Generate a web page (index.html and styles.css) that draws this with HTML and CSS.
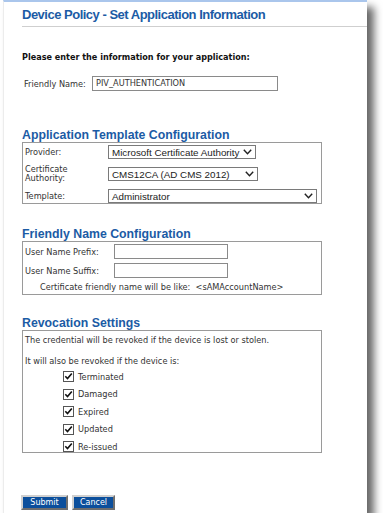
FILE: index.html
```html
<!DOCTYPE html>
<html lang="en">
<head>
    <meta charset="UTF-8">
    <title>Device Policy - Set Application Information</title>
    <link rel="stylesheet" href="styles.css">
</head>
<body>
    <div class="window">
        <h1 class="title">Device Policy - Set Application Information</h1>

        <p class="intro">Please enter the information for your application:</p>
        <div class="friendly-row">
            <span class="friendly-label">Friendly Name:</span>
            <span class="text-input friendly-input">PIV_AUTHENTICATION</span>
        </div>

        <!-- Application template -->
        <h2 class="section-title">Application Template Configuration</h2>
        <div class="box template-box">
            <span class="row-label">Provider:</span>
            <div class="select select-provider">Microsoft Certificate Authority
                <svg class="chevron" width="9" height="6" viewBox="0 0 9 6"><path d="M0.8 0.8 L4.5 4.8 L8.2 0.8" fill="none" stroke="#222" stroke-width="1.4"/></svg>
            </div>
            <span class="row-label two-line">Certificate<br>Authority:</span>
            <div class="select select-ca">CMS12CA (AD CMS 2012)
                <svg class="chevron" width="9" height="6" viewBox="0 0 9 6"><path d="M0.8 0.8 L4.5 4.8 L8.2 0.8" fill="none" stroke="#222" stroke-width="1.4"/></svg>
            </div>
            <span class="row-label">Template:</span>
            <div class="select select-template">Administrator
                <svg class="chevron" width="9" height="6" viewBox="0 0 9 6"><path d="M0.8 0.8 L4.5 4.8 L8.2 0.8" fill="none" stroke="#222" stroke-width="1.4"/></svg>
            </div>
        </div>

        <!-- Friendly name -->
        <h2 class="section-title">Friendly Name Configuration</h2>
        <div class="box name-box">
            <div class="name-row">
                <span class="name-label">User Name Prefix:</span>
                <span class="text-input name-input"></span>
            </div>
            <div class="name-row">
                <span class="name-label">User Name Suffix:</span>
                <span class="text-input name-input"></span>
            </div>
            <p class="name-preview">Certificate friendly name will be like:&nbsp;&nbsp;&lt;sAMAccountName&gt;</p>
        </div>

        <!-- Revocation -->
        <h2 class="section-title">Revocation Settings</h2>
        <div class="box revoke-box">
            <p class="revoke-text">The credential will be revoked if the device is lost or stolen.</p>
            <p class="revoke-text second">It will also be revoked if the device is:</p>
            <ul class="checks">
                <li><span class="checkbox"><svg width="11" height="11" viewBox="0 0 11 11"><rect x="0.5" y="0.5" width="10" height="10" fill="#fff" stroke="#555"/><path d="M2.3 5.2 L4.5 7.6 L8.8 2.4" fill="none" stroke="#111" stroke-width="1.6"/></svg></span>Terminated</li>
                <li><span class="checkbox"><svg width="11" height="11" viewBox="0 0 11 11"><rect x="0.5" y="0.5" width="10" height="10" fill="#fff" stroke="#555"/><path d="M2.3 5.2 L4.5 7.6 L8.8 2.4" fill="none" stroke="#111" stroke-width="1.6"/></svg></span>Damaged</li>
                <li><span class="checkbox"><svg width="11" height="11" viewBox="0 0 11 11"><rect x="0.5" y="0.5" width="10" height="10" fill="#fff" stroke="#555"/><path d="M2.3 5.2 L4.5 7.6 L8.8 2.4" fill="none" stroke="#111" stroke-width="1.6"/></svg></span>Expired</li>
                <li><span class="checkbox"><svg width="11" height="11" viewBox="0 0 11 11"><rect x="0.5" y="0.5" width="10" height="10" fill="#fff" stroke="#555"/><path d="M2.3 5.2 L4.5 7.6 L8.8 2.4" fill="none" stroke="#111" stroke-width="1.6"/></svg></span>Updated</li>
                <li><span class="checkbox"><svg width="11" height="11" viewBox="0 0 11 11"><rect x="0.5" y="0.5" width="10" height="10" fill="#fff" stroke="#555"/><path d="M2.3 5.2 L4.5 7.6 L8.8 2.4" fill="none" stroke="#111" stroke-width="1.6"/></svg></span>Re-issued</li>
            </ul>
        </div>

        <div class="buttons">
            <button class="btn btn-submit">Submit</button>
            <button class="btn btn-cancel">Cancel</button>
        </div>
    </div>
</body>
</html>
```

FILE: styles.css
```css
body {
    margin: 0;
    background: #ffffff;
    font-family: "DejaVu Sans", Verdana, sans-serif;
    color: #222;
}
.window {
    box-sizing: border-box;
    width: 364px;
    height: 513px;
    margin-left: 3px;
    padding-left: 18px;
    background: #ffffff;
    border-top: 2px solid #aac6ec;
    border-left: 1px solid #ececec;
    box-shadow: 7px 7px 8px rgba(0,0,0,0.6);
    overflow: hidden;
}
.title {
    margin: 0;
    padding: 5px 0 3px 0;
    font-family: "Liberation Sans", Arial, sans-serif;
    font-size: 13px;
    letter-spacing: -0.5px;
    line-height: 16px;
    font-weight: bold;
    color: #1b5ba5;
    border-bottom: 1px solid #cfcfcf;
}
.intro {
    margin: 25px 0 0 0;
    font-size: 8.1px;
    line-height: 10px;
    font-weight: bold;
    color: #111;
}
.friendly-row {
    display: flex;
    align-items: center;
    margin: 14px 0 0 2px;
    font-size: 8.2px;
}
.friendly-label {
    width: 68px;
    color: #333;
}
.text-input {
    box-sizing: border-box;
    display: block;
    height: 15px;
    line-height: 13px;
    padding-left: 3px;
    border: 1px solid #8a8a8a;
    background: #fff;
    color: #333;
}
.friendly-input {
    width: 186px;
}
.section-title {
    margin: 0;
    font-family: "Liberation Sans", Arial, sans-serif;
    font-size: 12.3px;
    line-height: 14px;
    font-weight: bold;
    color: #1b5ba5;
}
.friendly-row + .section-title {
    margin-top: 37px;
}
.box + .section-title {
    margin-top: 23px;
}
.name-box + .section-title {
    margin-top: 21px;
}
.box {
    box-sizing: border-box;
    width: 300px;
    border: 1px solid #9a9a9a;
    font-size: 8.2px;
    color: #333;
}
.template-box {
    display: grid;
    grid-template-columns: 83px auto;
    row-gap: 6px;
    align-items: center;
    align-content: start;
    padding: 2px 0 0 2px;
    height: 62px;
}
.row-label.two-line {
    line-height: 9px;
}
.select {
    box-sizing: border-box;
    display: flex;
    align-items: center;
    justify-content: space-between;
    height: 14px;
    padding: 0 3px 0 3px;
    border: 1px solid #7a7a7a;
    background: #fff;
    font-family: "Liberation Sans", Arial, sans-serif;
    font-size: 9.8px;
    color: #222;
    white-space: nowrap;
}
.select-provider { width: 148px; }
.select-ca { width: 150px; }
.select-template { width: 209px; }
.name-box {
    height: 54px;
    padding: 2px 0 0 2px;
}
.name-row {
    display: flex;
    align-items: center;
    margin-bottom: 4px;
}
.name-label {
    width: 89px;
}
.name-input {
    width: 114px;
}
.name-preview {
    margin: 2px 0 0 15px;
}
.revoke-box {
    height: 123px;
    padding: 4px 0 0 2px;
}
.revoke-text {
    margin: 0;
    line-height: 10px;
}
.revoke-text.second {
    margin-top: 11px;
}
.checks {
    list-style: none;
    margin: 2px 0 0 38px;
    padding: 0;
}
.checks li {
    display: flex;
    align-items: center;
    height: 17.5px;
}
.checkbox {
    display: inline-flex;
    margin-right: 4px;
}
.buttons {
    display: flex;
    gap: 4px;
    margin-top: 42px;
}
.btn {
    box-sizing: border-box;
    height: 15px;
    padding: 0;
    font-family: "DejaVu Sans", Verdana, sans-serif;
    font-size: 8px;
    color: #fff;
    background: #0c4f9c;
    border: 2px solid;
    border-color: #d0d0d0 #6e6e6e #6e6e6e #d0d0d0;
}
.btn-submit { width: 47px; margin-left: -1px; }
.btn-cancel { width: 43px; }
```
